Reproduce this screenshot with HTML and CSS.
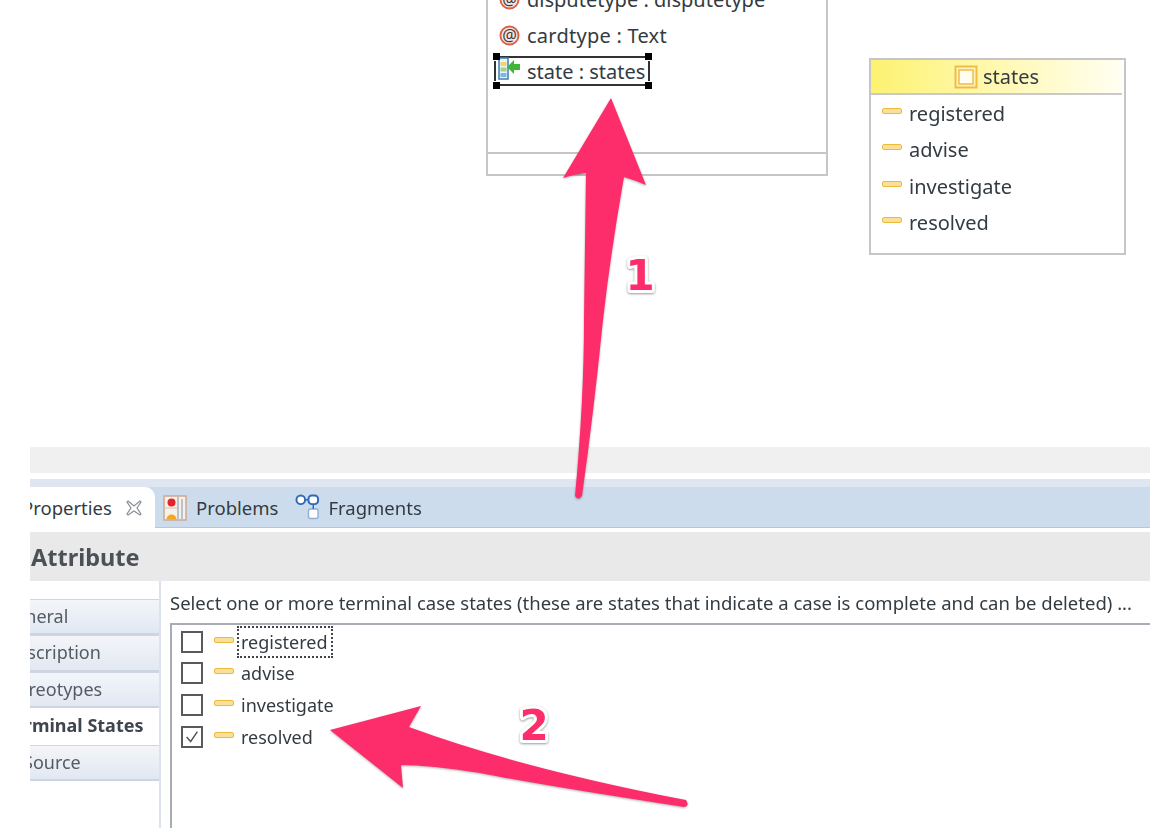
FILE: index.html
```html
<!DOCTYPE html>
<html lang="en">
<head>
<meta charset="utf-8">
<title>Terminal States</title>
<link rel="stylesheet" href="styles.css">
</head>
<body>
<div class="page">
  <div class="canvas">
    <div class="node node-class">
      <div class="compartment">
        <div class="attr"><svg class="ic-at" viewBox="0 0 22 22"><circle cx="11" cy="11" r="9.500" fill="#fbe3dc" stroke="#d9604a" stroke-width="2"/><text x="11" y="16.500" text-anchor="middle" class="at-glyph">@</text></svg><span>disputetype : disputetype</span></div>
        <div class="attr"><svg class="ic-at" viewBox="0 0 22 22"><circle cx="11" cy="11" r="9.500" fill="#fbe3dc" stroke="#d9604a" stroke-width="2"/><text x="11" y="16.500" text-anchor="middle" class="at-glyph">@</text></svg><span>cardtype : Text</span></div>
        <div class="attr attr-selected">
          <svg class="ic-state" viewBox="0 0 28 24"><rect x="3" y="1" width="9" height="21" fill="#eaf3fa" stroke="#3f7fb5" stroke-width="1.500"/><rect x="4.500" y="5" width="6" height="4" fill="#f3d36b"/><rect x="4.500" y="10.500" width="6" height="4" fill="#9fd28a"/><rect x="4.500" y="16" width="6" height="4" fill="#7fb6dd"/><path d="M24 7v6h-6v4l-7-7 7-7v4z" fill="#3fb53a"/></svg>
          <span>state : states</span>
          <i class="handle h-tl"></i><i class="handle h-tr"></i><i class="handle h-bl"></i><i class="handle h-br"></i>
          <i class="edge edge-l"></i><i class="edge edge-r"></i>
        </div>
      </div>
      <div class="compartment-empty"></div>
    </div>

    <div class="node node-enum">
      <div class="enum-head"><svg class="ic-enum" viewBox="0 0 24 24"><rect x="1.500" y="1.500" width="21" height="21" fill="#fdf3c0" stroke="#efbd45" stroke-width="2"/><rect x="5" y="5" width="14" height="14" fill="#fffdf0" stroke="#efbd45" stroke-width="1.500"/></svg><span>states</span></div>
      <div class="enum-row"><i class="lit"></i><span>registered</span></div>
      <div class="enum-row"><i class="lit"></i><span>advise</span></div>
      <div class="enum-row"><i class="lit"></i><span>investigate</span></div>
      <div class="enum-row"><i class="lit"></i><span>resolved</span></div>
    </div>
  </div>

  <div class="panel">
    <div class="grayband"></div>
    <div class="tabs">
      <div class="tab tab-active"><span>Properties</span><svg class="ic-close" viewBox="0 0 18 18"><path d="M3 2l6 5 6-5 1 1-4 6 4 6-1 1-6-4-6 4-1-1 4-6-4-6z" fill="#fff" stroke="#8a8f96" stroke-width="1.200"/></svg></div>
      <div class="tab"><svg class="ic-problems" viewBox="0 0 24 26"><rect x="1" y="1" width="22" height="24" fill="#f6f1ea" stroke="#cba893" stroke-width="1.500"/><path d="M2 13h12" stroke="#d9c2b0" stroke-width="1"/><circle cx="8.500" cy="7.500" r="4" fill="#e0262b"/><path d="M3.500 24.500a5 5 0 0 1 10 0z" fill="#f4a81d"/><path d="M15 2v22M19 4v20" stroke="#a7b4c3" stroke-width="1.500"/></svg><span>Problems</span></div>
      <div class="tab"><svg class="ic-fragments" viewBox="0 0 26 27"><circle cx="6" cy="6.500" r="4.500" fill="#fff" stroke="#2f68b5" stroke-width="2"/><rect x="14" y="2" width="10" height="9" rx="3.500" fill="#fff" stroke="#2f68b5" stroke-width="2"/><rect x="14" y="16" width="10" height="10" rx="2" fill="#fff" stroke="#8fb0d8" stroke-width="1.500"/><path d="M10.500 6.500h3.500M19 11v5" stroke="#2f68b5" stroke-width="1.500"/></svg><span>Fragments</span></div>
    </div>
    <div class="title">Attribute</div>
    <div class="body">
      <div class="side">
        <div class="side-tab"><span class="s-general">General</span></div>
        <div class="side-tab"><span class="s-description">Description</span></div>
        <div class="side-tab"><span class="s-stereo">Stereotypes</span></div>
        <div class="side-tab side-active"><span class="s-terminal">Terminal States</span></div>
        <div class="side-tab"><span class="s-source">Source</span></div>
      </div>
      <div class="content">
        <div class="hint">Select one or more terminal case states (these are states that indicate a case is complete and can be deleted) ...</div>
        <div class="list">
          <div class="item"><i class="check"></i><i class="lit"></i><span class="focus">registered</span></div>
          <div class="item"><i class="check"></i><i class="lit"></i><span>advise</span></div>
          <div class="item"><i class="check"></i><i class="lit"></i><span>investigate</span></div>
          <div class="item"><i class="check"><svg viewBox="0 0 20 20"><path d="M4 10l4.500 5L16 4" fill="none" stroke="#555" stroke-width="1.600"/></svg></i><i class="lit"></i><span>resolved</span></div>
        </div>
      </div>
    </div>
  </div>

  <svg class="overlay" viewBox="0 0 1150 828">
    <path class="arrow" d="M611 98L646 185Q634 180 624 177Q611 250 603 320Q594 410 582 496Q578 501 575 496Q584 400 584 320Q585 240 586 173Q574 174 563 178Z"/>
    <path class="arrow" d="M330 730L421 706L409 727Q520 768 686 800Q690 806 684 807Q540 785 480 773Q430 765 401 765L403 788Z"/>
    <text class="num" x="640" y="290" text-anchor="middle">1</text>
    <text class="num" x="534" y="740" text-anchor="middle">2</text>
  </svg>
</div>
</body>
</html>
```
FILE: styles.css
```css
* { box-sizing: border-box; }
html, body { margin: 0; background: #fff; }
body { font-family: "Noto Sans", "Open Sans", sans-serif; font-size: 20px; color: #333b42; }
i { display: block; }
.page { position: relative; width: 1150px; height: 828px; overflow: hidden; }
.canvas { position: relative; height: 447px; filter: blur(.55px); }

.node { position: absolute; background: #fff; border: 2px solid #c6c6c6; }
.node-class { left: 486px; top: -30px; width: 342px; height: 206px; border-top: 0; }
.compartment { height: 184px; padding-top: 11px; border-bottom: 2px solid #c6c6c6; }
.attr { position: relative; display: flex; align-items: center; height: 36.500px; padding-left: 11px; gap: 7px; white-space: nowrap; }
.attr:nth-child(2) span { letter-spacing: .25px; }
.ic-at { width: 21px; height: 21px; flex: none; }
.at-glyph { font: 400 17px "Noto Sans", sans-serif; fill: #3a3a3a; }
.attr-selected { width: 153px; margin-left: 8px; padding-left: 0; height: 30px; margin-top: 2px; border-top: 2px solid #333; border-bottom: 2px solid #333; gap: 3px; }
.ic-state { width: 28px; height: 24px; flex: none; margin-top: -4px; }
.handle { position: absolute; width: 7px; height: 7px; background: #000; }
.h-tl { left: -3px; top: -5px; }
.h-tr { right: -3px; top: -5px; }
.h-bl { left: -3px; bottom: -5px; }
.h-br { right: -3px; bottom: -5px; }
.edge { position: absolute; top: 3px; bottom: 3px; width: 2px; background: #333; }
.edge-l { left: -2px; }
.edge-r { right: -1px; }

.node-enum { left: 869px; top: 58px; width: 257px; height: 197px; }
.enum-head { display: flex; align-items: center; justify-content: center; gap: 5px; height: 35px; margin-right: 2px; background: linear-gradient(90deg, #fdf271, #fff9b8 55%, #fffff2); border-bottom: 2px solid #c9c9c9; }
.ic-enum { width: 24px; height: 24px; }
.enum-row { display: flex; align-items: center; height: 36.500px; padding-left: 11px; gap: 7px; }
.lit { width: 20px; height: 6px; flex: none; border: 1.500px solid #efb93c; background: #f9e09a; border-radius: 2px; margin-top: -5px; }

.panel { margin-left: 30px; height: 381px; overflow: hidden; filter: blur(.55px); }
.grayband { height: 26px; background: #f0f0f0; margin-bottom: 6px; }
.tabs { display: flex; align-items: stretch; height: 49px; padding-top: 8px; background: #cddcec; box-shadow: inset 0 8px 0 #dfe6f1, inset 0 -1px 0 #b7c7d8; font-size: 18.500px; }
.tab { display: flex; align-items: center; gap: 9px; white-space: nowrap; }
.tab:nth-child(2) { margin-left: 8px; }
.tab:nth-child(3) { margin-left: 17px; gap: 8px; }
.tab-active { width: 125px; background: #fff; border-top-right-radius: 10px; overflow: hidden; gap: 13px; }
.tab-active span { margin-left: -8px; }
.ic-close { width: 18px; height: 18px; flex: none; }
.ic-problems { width: 24px; height: 26px; }
.ic-fragments { width: 25px; height: 27px; margin-top: -3px; }
.title { margin-top: 4px; height: 49px; padding: 2px 0 0 1px; background: #e9e9e9; font-size: 23.500px; font-weight: 700; color: #4c5157; line-height: 47px; }
.body { display: flex; height: 247px; }
.side { width: 131px; flex: none; padding-top: 18px; border-right: 2px solid #dde3ec; overflow: hidden; font-size: 18px; }
.side-tab { height: 36.400px; line-height: 32px; background: linear-gradient(#f3f5f9, #e2e8f2); border-top: 1px solid #cfd6e2; border-bottom: 2px solid #cdd5e3; white-space: nowrap; color: #555b62; }
.side-tab span { display: block; }
.s-general { margin-left: -28px; }
.s-description { margin-left: -26px; }
.s-stereo { margin-left: -28px; }
.s-terminal { margin-left: -26px; }
.s-source { margin-left: -7px; }
.side-active { background: #fff; border-color: #fff; font-weight: 700; color: #3f454c; }
.content { flex: 1; min-width: 0; padding: 10px 0 0 9px; }
.hint { height: 32px; line-height: 23px; white-space: nowrap; font-size: 18.500px; }
.list { height: 210px; padding: 1px 0 0 9px; border: 2px solid #a9adb3; border-right: 0; border-bottom: 0; font-size: 18px; }
.item { display: flex; align-items: center; height: 31.600px; }
.check { width: 22px; height: 22px; flex: none; border: 2px solid #5a5a5a; background: #fff; }
.check svg { display: block; width: 18px; height: 18px; }
.item .lit { margin: -4px 7px 0 11px; }
.focus { outline: 2px dotted #444; outline-offset: 2px; padding: 0 1px 0 0; }

.overlay { position: absolute; left: 0; top: 0; width: 1150px; height: 828px; pointer-events: none; }
.arrow { fill: #fc2d6a; filter: drop-shadow(0 1px 1px rgba(0, 0, 0, .3)); }
.num { font: 700 42px "DejaVu Sans", sans-serif; fill: #fc2d6a; stroke: #fff; stroke-width: 6px; stroke-linejoin: round; paint-order: stroke; filter: drop-shadow(0 1px 1px rgba(0, 0, 0, .4)); }
```
